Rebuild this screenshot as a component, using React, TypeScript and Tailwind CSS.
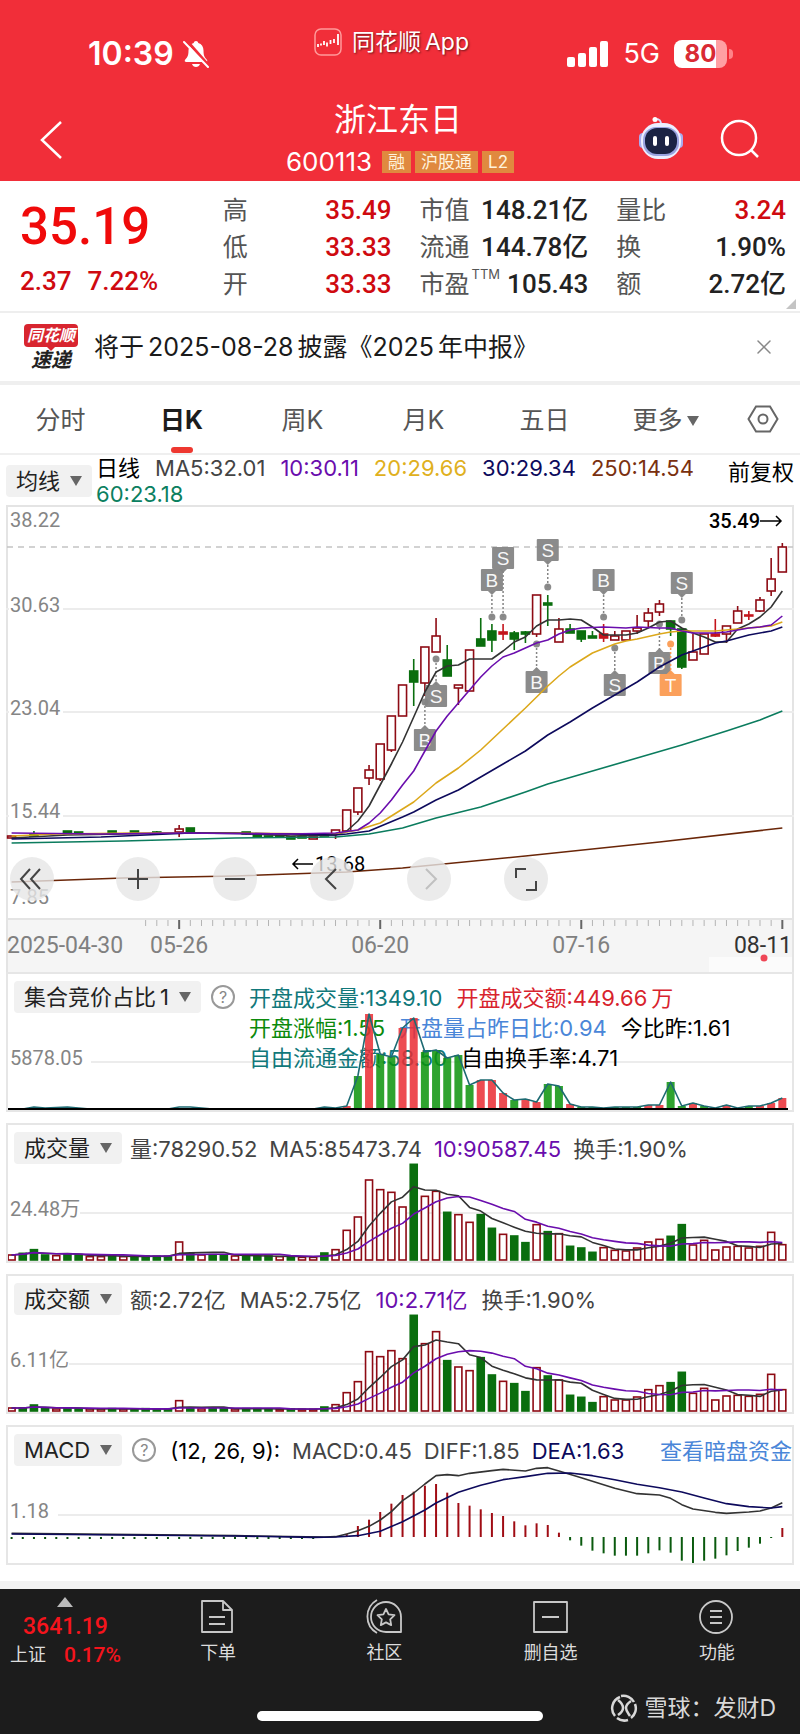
import type { ReactNode } from 'react'
import { X } from 'lucide-react'

const RED = '#8e0b14'
const GREEN = '#0a6e0e'

const STEP = 11.17
const xAt = (i: number) => 5.6 + STEP * i

type Point = [number, number]

// [index, body top, body bottom, wick top, wick bottom, colour]
type Candle = [number, number, number, number, number, 'r' | 'g' | 'f']

const candles: Candle[] = [
  [0, 331, 333, 331, 333, 'r'],
  [2, 329, 331, 326, 331, 'g'],
  [5, 326, 329, 326, 329, 'g'],
  [6, 327, 328, 327, 328, 'g'],
  [9, 326, 328, 326, 328, 'g'],
  [11, 326, 328, 326, 328, 'g'],
  [13, 327, 328, 326, 328, 'g'],
  [15, 324, 327, 320, 332, 'r'],
  [16, 323, 327, 323, 327, 'g'],
  [21, 327, 329, 327, 330, 'g'],
  [22, 330, 332, 330, 332, 'g'],
  [23, 331, 332, 331, 332, 'g'],
  [24, 331, 332, 331, 332, 'g'],
  [25, 332, 334, 332, 334, 'g'],
  [26, 332, 333, 332, 333, 'g'],
  [27, 332, 334, 332, 334, 'r'],
  [28, 329, 331, 328, 331, 'g'],
  [29, 325, 329, 325, 334, 'r'],
  [30, 305, 326, 305, 326, 'r'],
  [31, 283, 307, 283, 310, 'r'],
  [32, 265, 273, 260, 280, 'r'],
  [33, 239, 274, 239, 276, 'r'],
  [34, 211, 245, 211, 247, 'r'],
  [35, 180, 211, 180, 211, 'r'],
  [36, 166, 177, 154, 201, 'g'],
  [37, 142, 178, 142, 191, 'r'],
  [38, 131, 147, 113, 147, 'r'],
  [39, 155, 171, 140, 171, 'g'],
  [40, 180, 183, 180, 200, 'r'],
  [41, 145, 186, 145, 186, 'r'],
  [42, 134, 141, 113, 141, 'g'],
  [43, 126, 135, 119, 147, 'g'],
  [44, 127, 129, 119, 135, 'f'],
  [45, 128, 134, 126, 145, 'g'],
  [46, 127, 129, 126, 138, 'g'],
  [47, 90, 129, 90, 132, 'r'],
  [48, 98, 100, 90, 121, 'g'],
  [49, 124, 137, 113, 137, 'r'],
  [50, 124, 128, 119, 128, 'g'],
  [51, 126, 134, 126, 137, 'g'],
  [52, 131, 133, 126, 133, 'g'],
  [53, 129, 133, 119, 137, 'f'],
  [54, 131, 135, 126, 135, 'r'],
  [55, 126, 135, 126, 135, 'r'],
  [56, 123, 126, 110, 129, 'r'],
  [57, 108, 116, 103, 123, 'r'],
  [58, 99, 107, 95, 111, 'r'],
  [59, 116, 124, 116, 131, 'g'],
  [60, 124, 162, 124, 164, 'g'],
  [61, 147, 155, 129, 155, 'r'],
  [62, 129, 149, 129, 149, 'r'],
  [63, 129, 131, 114, 132, 'f'],
  [64, 121, 129, 121, 138, 'r'],
  [65, 106, 118, 101, 118, 'r'],
  [66, 110, 111, 106, 115, 'f'],
  [67, 95, 106, 92, 107, 'r'],
  [68, 74, 86, 53, 91, 'r'],
  [69, 42, 67, 38, 67, 'r'],
]

const averages: { color: string; points: Point[] }[] = [
  {
    color: '#6a2608',
    points: [[0, 377], [10, 373], [20, 371], [30, 367], [35, 363], [46, 351], [58, 337], [69, 323]],
  },
  {
    color: '#0b7c5e',
    points: [[0, 338], [10, 336], [20, 333], [29, 332], [32, 329], [35, 323], [38, 313], [42, 302], [46, 287], [48, 279], [52, 266], [56, 253], [60, 240], [64, 226], [67, 215], [69, 206]],
  },
  {
    color: '#333333',
    points: [[0, 333], [5, 330], [10, 329], [15, 328], [20, 328], [25, 331], [29, 330], [30, 326], [31, 316], [32, 301], [33, 280], [34, 259], [35, 237], [36, 212], [37, 187], [38, 167], [39, 161], [40, 160], [41, 154], [42, 154], [43, 154], [44, 146], [45, 137], [46, 132], [47, 121], [48, 115], [49, 115], [50, 114], [51, 115], [52, 122], [53, 130], [54, 130], [55, 130], [56, 128], [57, 123], [58, 117], [59, 116], [60, 123], [61, 128], [62, 132], [63, 137], [64, 137], [65, 124], [66, 119], [67, 112], [68, 102], [69, 86]],
  },
  {
    color: '#dca81b',
    points: [[0, 331], [4, 329], [11, 328], [20, 328], [29, 329], [30, 327], [31, 325], [33, 318], [35, 304], [36, 297], [38, 278], [40, 263], [42, 245], [44, 224], [46, 203], [47, 192], [48, 181], [49, 171], [50, 162], [52, 148], [54, 139], [55, 136], [56, 134], [58, 129], [59, 127], [60, 126], [63, 126], [66, 123], [68, 121], [69, 117]],
  },
  {
    color: '#0d0a5c',
    points: [[0, 334], [8, 332], [16, 328], [25, 329], [29, 330], [30, 329], [32, 326], [35, 312], [36, 307], [38, 295], [40, 285], [42, 272], [44, 259], [46, 246], [48, 230], [50, 217], [52, 203], [54, 190], [56, 177], [58, 162], [60, 150], [62, 142], [63, 138], [64, 136], [66, 130], [68, 126], [69, 122]],
  },
  {
    color: '#6a0dad',
    points: [[0, 328], [8, 329], [15, 328], [25, 329], [29, 328], [31, 325], [32, 318], [33, 308], [34, 295], [35, 280], [36, 266], [37, 246], [38, 226], [39, 211], [40, 198], [41, 185], [42, 172], [43, 161], [44, 152], [45, 148], [46, 143], [47, 138], [48, 135], [49, 129], [50, 125], [51, 123], [53, 122], [55, 123], [56, 122], [58, 123], [59, 123], [60, 126], [61, 128], [63, 128], [64, 127], [66, 123], [67, 122], [68, 120], [69, 111]],
  },
]

const markers: { i: number; label: string; top: number; dot: number }[] = [
  { i: 38, label: 'S', top: 180, dot: 154 },
  { i: 37, label: 'B', top: 224, dot: 197 },
  { i: 43, label: 'B', top: 64, dot: 112 },
  { i: 44, label: 'S', top: 42, dot: 112 },
  { i: 48, label: 'S', top: 34, dot: 82 },
  { i: 47, label: 'B', top: 166, dot: 139 },
  { i: 53, label: 'B', top: 64, dot: 112 },
  { i: 54, label: 'S', top: 169, dot: 143 },
  { i: 58, label: 'B', top: 147, dot: 119 },
  { i: 59, label: 'T', top: 169, dot: 139 },
  { i: 60, label: 'S', top: 67, dot: 115 },
]

// one letter per trading day: r = up, g = down
const days = 'rgggrggrrgrggggrgrggrgggrgrrgrrrrrrrgrrgrrggrggrgrgggrrrrrrggrrrrrrrrr'

const volume = [
  18, 23, 34, 18, 16, 19, 19, 13, 13, 15, 13, 14, 15, 14, 14, 57, 22, 18, 19, 16, 15, 14, 14, 15, 13,
  14, 11, 11, 24, 34, 92, 132, 243, 214, 206, 162, 290, 194, 209, 146, 139, 116, 139, 98, 80, 75, 55,
  109, 88, 82, 44, 39, 26, 40, 32, 30, 39, 57, 65, 74, 109, 48, 62, 33, 42, 44, 39, 44, 86, 49,
]

const turnover = [
  12, 12, 21, 10, 9, 10, 10, 9, 9, 10, 9, 9, 10, 9, 9, 34, 11, 9, 10, 10, 9, 10, 10, 9, 8, 9, 8, 8, 15,
  22, 58, 91, 181, 166, 184, 160, 290, 205, 241, 154, 135, 124, 163, 111, 92, 85, 61, 133, 108, 96, 50,
  44, 28, 46, 36, 36, 45, 67, 79, 88, 119, 56, 71, 36, 48, 50, 47, 53, 113, 67,
]

// bar tops of the auction chart, from day 28 on
const auction: [number, 'r' | 'g'][] = [
  [135, 'g'], [136, 'g'], [134, 'r'], [104, 'g'], [42, 'r'], [82, 'g'], [85, 'g'], [56, 'r'], [46, 'r'],
  [80, 'g'], [78, 'g'], [86, 'g'], [83, 'g'], [113, 'g'], [108, 'r'], [108, 'r'], [121, 'r'], [128, 'g'],
  [127, 'r'], [130, 'r'], [112, 'g'], [114, 'g'], [132, 'r'], [135, 'g'], [135, 'g'], [136, 'g'],
  [135, 'g'], [135, 'g'], [135, 'g'], [133, 'r'], [133, 'r'], [110, 'g'], [134, 'g'], [131, 'r'],
  [134, 'g'], [136, 'g'], [133, 'r'], [136, 'g'], [134, 'g'], [134, 'r'], [131, 'r'], [126, 'r'],
]

const histogram = [
  10, 33, 52, 75, 100, 126, 136, 154, 159, 133, 102, 94, 83, 72, 63, 47, 35, 41, 36, 13, -10, -26, -41,
  -49, -56, -56, -56, -49, -40, -47, -71, -78, -71, -65, -55, -42, -32, -20, -3, 27,
]

const diff: Point[] = [
  [0, 373], [20, 380], [28, 384], [29, 383], [30, 375], [31, 365], [32, 352], [33, 333], [34, 308],
  [35, 275], [36, 252], [37, 225], [38, 200], [39, 197], [40, 200], [41, 193], [43, 185], [44, 181],
  [46, 186], [47, 178], [48, 176], [49, 186], [51, 206], [54, 238], [56, 254], [58, 258], [59, 268],
  [60, 287], [61, 300], [63, 310], [64, 313], [66, 309], [67, 306], [68, 297], [69, 281],
]

const dea: Point[] = [
  [0, 375], [20, 381], [27, 385], [29, 384], [31, 380], [33, 367], [35, 338], [37, 303], [38, 282],
  [40, 250], [42, 229], [44, 212], [46, 203], [48, 193], [50, 192], [52, 200], [54, 212], [56, 226],
  [58, 236], [60, 249], [62, 267], [64, 284], [66, 293], [68, 297], [69, 293],
]

const toPoints = (points: Point[]) => points.map(([i, y]) => `${xAt(i)},${y}`).join(' ')

function movingAverage(values: number[], size: number): Point[] {
  return values.map((_, i) => {
    const part = values.slice(Math.max(0, i - size + 1), i + 1)
    return [i, 138 - part.reduce((a, b) => a + b, 0) / part.length / 3]
  })
}

function Line({ points, color }: { points: Point[]; color: string }) {
  return (
    <polyline
      points={toPoints(points)}
      fill="none"
      stroke={color}
      strokeWidth="1.6"
      strokeLinejoin="round"
    />
  )
}

function Caret() {
  return (
    <svg viewBox="0 0 12 10" className="h-2.5 w-3 shrink-0 fill-[#666]">
      <path d="M0 0h12L6 10z" />
    </svg>
  )
}

function StatusBar() {
  return (
    <div className="grid h-24 grid-cols-[226px_1fr_auto] items-start pr-[67px] pl-[88px]">
      <div className="flex items-center gap-2 pt-9">
        <span className="text-[32px] leading-9 font-semibold">10:39</span>
        <svg viewBox="0 0 28 28" className="size-7">
          <path
            d="M14 1c1.3 0 2 .8 2.300 2 3.500 1 5.200 4 5.200 7.500 0 6 1.500 7 3.500 9.500.8 1-.1 2-1.200 2H4.200c-1.100 0-2-1-1.200-2 2-2.500 3.500-3.500 3.500-9.500 0-3.500 1.700-6.500 5.200-7.500.3-1.200 1-2 2.300-2zM10 24h8c-.6 2-2.200 3-4 3s-3.400-1-4-3z"
            fill="#fff"
          />
          <path d="M5 1l22 25" stroke="#f12e39" strokeWidth="3" />
          <path d="M2 2l24 25" stroke="#fff" strokeWidth="2" strokeLinecap="round" />
        </svg>
      </div>
      <div className="flex items-center gap-2.5 pt-6">
        <svg viewBox="0 0 28 28" className="size-7">
          <rect x="1" y="1" width="26" height="26" rx="6" fill="none" stroke="#ff9a9a" strokeWidth="1.5" />
          <path d="M4 16v3M7 15.500v2M10 13v4M13 14.500v4M16.500 12v4M20 11v4M24 6v11" stroke="#fff" strokeWidth="1.800" />
        </svg>
        <span className="text-[23px] leading-9 text-shadow-[1px_1px_2px_#0008]">
          同花顺<span className="ml-1">App</span>
        </span>
      </div>
      <div className="flex items-center gap-3.5 pt-9">
        <svg viewBox="0 0 42 26" className="h-[26px] w-[42px] shrink-0 fill-white">
          <rect x="0" y="16" width="8" height="10" rx="2" />
          <rect x="11" y="12" width="8" height="14" rx="2" />
          <rect x="22" y="6" width="8" height="20" rx="2" />
          <rect x="33" y="0" width="8" height="26" rx="2" />
        </svg>
        <span className="text-[27px] leading-9">5G</span>
        <div className="flex items-center gap-0.5">
          <span className="flex h-7 w-[53px] items-center justify-center overflow-hidden rounded-lg bg-linear-to-r from-white from-80% to-[#ff9fa3] to-80% text-2xl font-bold text-[#d92a34]">
            80
          </span>
          <span className="h-2.5 w-1 rounded-r bg-[#ff8288]" />
        </div>
      </div>
    </div>
  )
}

function Badge({ children }: { children: ReactNode }) {
  return (
    <span className="flex h-[22px] items-center bg-[#e0893f] px-1.5 text-[17px] leading-[22px] text-[#fff3dc]">
      {children}
    </span>
  )
}

function Robot() {
  return (
    <svg viewBox="0 0 46 44" className="h-11 w-[46px]">
      <path d="M23 9c0-4-1-6-5-6" fill="none" stroke="#d8dcff" strokeWidth="2" />
      <circle cx="17" cy="3.500" r="2.500" fill="#fff" />
      <rect x="1" y="17" width="8" height="15" rx="4" fill="#a9abef" />
      <rect x="37" y="17" width="8" height="15" rx="4" fill="#a9abef" />
      <rect x="3" y="7" width="40" height="36" rx="17" fill="#eceeff" />
      <rect x="5" y="11" width="36" height="29" rx="13" fill="#9aa3e0" />
      <rect x="7" y="12" width="32" height="26" rx="12" fill="#1b2344" />
      <rect x="15" y="20" width="4" height="10" rx="2" fill="#fff" />
      <rect x="27" y="20" width="4" height="10" rx="2" fill="#fff" />
    </svg>
  )
}

function TitleBar() {
  return (
    <div className="flex h-[85px] items-start justify-between pr-10 pl-9">
      <button type="button" aria-label="返回" className="mt-6 w-[122px]">
        <svg viewBox="0 0 32 40" className="h-10 w-8">
          <path d="M25 2L6 20l19 18" fill="none" stroke="#fff" strokeWidth="2.500" />
        </svg>
      </button>
      <div className="flex flex-col items-center gap-2 pt-1">
        <h1 className="text-[32px] leading-10">浙江东日</h1>
        <div className="flex h-7 items-center gap-1 pl-1">
          <span className="mr-1.5 text-[26px] leading-7">600113</span>
          <Badge>融</Badge>
          <Badge>沪股通</Badge>
          <Badge>L2</Badge>
        </div>
      </div>
      <div className="mt-5 flex items-center gap-9">
        <button type="button" aria-label="智能助手">
          <Robot />
        </button>
        <button type="button" aria-label="搜索">
          <svg viewBox="0 0 40 40" className="size-10" fill="none" stroke="#fff" strokeWidth="2.500">
            <circle cx="19" cy="20" r="17" />
            <path d="M31 32l7 7" />
          </svg>
        </button>
      </div>
    </div>
  )
}

function Stat({ label, sup, value, up }: { label: string; sup?: string; value: string; up?: boolean }) {
  return (
    <div className="flex h-[37px] items-center justify-between">
      <dt className="flex items-start text-[25px] leading-9 text-[#555]">
        {label}
        {sup ? <sup className="top-0 ml-0.5 text-[13px] leading-4">{sup}</sup> : null}
      </dt>
      <dd
        className={
          up
            ? "font-[Roboto,'Noto_Sans_CJK_SC',sans-serif] text-[26px] leading-9 font-medium text-[#cf0a10]"
            : "font-[Roboto,'Noto_Sans_CJK_SC',sans-serif] text-[26px] leading-9 font-medium text-[#222]"
        }
      >
        {value}
      </dd>
    </div>
  )
}

function Quote() {
  return (
    <section className="relative grid h-[132px] grid-cols-[175fr_169fr_169fr_170fr] gap-7 border-b-2 border-[#eee] pt-2.5 pr-3.5 pl-5">
      <div className="font-[Roboto,sans-serif] font-medium">
        <p className="pt-2 text-[51px] leading-[56px] text-[#f00a0a]">35.19</p>
        <p className="flex gap-4 pt-2 text-[26px] leading-9 text-[#cf0a10]">
          <span>2.37</span>
          <span>7.22%</span>
        </p>
      </div>
      <dl>
        <Stat label="高" value="35.49" up />
        <Stat label="低" value="33.33" up />
        <Stat label="开" value="33.33" up />
      </dl>
      <dl>
        <Stat label="市值" value="148.21亿" />
        <Stat label="流通" value="144.78亿" />
        <Stat label="市盈" sup="TTM" value="105.43" />
      </dl>
      <dl>
        <Stat label="量比" value="3.24" up />
        <Stat label="换" value="1.90%" />
        <Stat label="额" value="2.72亿" />
      </dl>
      <svg viewBox="0 0 10 10" className="absolute right-1 bottom-0.5 size-2.5 fill-[#c4c4c4]">
        <path d="M10 0v10H0z" />
      </svg>
    </section>
  )
}

function News() {
  return (
    <section className="flex h-[68px] items-center pr-6 pl-6">
      <div className="flex w-[54px] flex-col items-center font-bold italic">
        <span className="relative flex h-[23px] w-full items-center justify-center rounded-sm bg-[#d8252f] text-base leading-none text-white">
          同花顺
          <svg viewBox="0 0 8 4" className="absolute top-full h-1 w-2 fill-[#d8252f]">
            <path d="M0 0h8L4 4z" />
          </svg>
        </span>
        <span className="pt-0.5 text-xl leading-[22px] text-[#222]">速递</span>
      </div>
      <p className="ml-4 flex-1 text-[25px] leading-9 text-[#1a1a1a]">
        将于<span className="mx-1">2025-08-28</span>披露《2025<span className="ml-1">年中报》</span>
      </p>
      <button type="button" aria-label="关闭" className="text-[#888]">
        <X className="size-6" strokeWidth={1.5} />
      </button>
    </section>
  )
}

const tabs = ['分时', '日K', '周K', '月K', '五日']

function Tabs() {
  return (
    <nav className="flex h-[74px] border-t-4 border-b-2 border-[#efefef] text-[25px] text-[#555]">
      {tabs.map((tab) =>
        tab === '日K' ? (
          <button key={tab} type="button" className="relative flex-1 pt-1 font-bold text-[#1c1c1c]">
            {tab}
            <span className="absolute bottom-0 left-1/2 h-1.5 w-[22px] -translate-x-1/2 rounded-full bg-[#ee3830]" />
          </button>
        ) : (
          <button key={tab} type="button" className="flex-1 pt-1">
            {tab}
          </button>
        ),
      )}
      <button type="button" className="flex flex-1 items-center justify-center gap-1 pt-1">
        更多
        <Caret />
      </button>
      <button type="button" aria-label="设置" className="flex w-[74px] items-center justify-center">
        <svg viewBox="0 0 32 28" className="h-7 w-8" fill="none" stroke="#666" strokeWidth="2">
          <path d="M9 1.500h14L30.500 14 23 26.500H9L1.500 14z" />
          <circle cx="16" cy="14" r="4.500" />
        </svg>
      </button>
    </nav>
  )
}

function Picker({ children }: { children: ReactNode }) {
  return (
    <button
      type="button"
      className="flex h-8 shrink-0 items-center gap-2.5 rounded-sm bg-[#f1f1f1] px-2.5 text-[22px] text-[#222]"
    >
      {children}
      <Caret />
    </button>
  )
}

function Averages() {
  return (
    <div className="flex h-[50px] items-start px-1.5 text-[22px] leading-[26px]">
      <div className="pt-2.5">
        <Picker>均线</Picker>
      </div>
      <div className="ml-1 flex flex-1 flex-wrap gap-x-[15px]">
        <span className="text-black">日线</span>
        <span className="text-[#444]">MA5:32.01</span>
        <span className="text-[#6a0dad]">10:30.11</span>
        <span className="text-[#e0b020]">20:29.66</span>
        <span className="text-[#0d0a5c]">30:29.34</span>
        <span className="text-[#7a300f]">250:14.54</span>
        <span className="text-[#0b8060]">60:23.18</span>
      </div>
      <button type="button" className="pt-1 text-black">
        前复权
      </button>
    </div>
  )
}

function CandleShape({ candle }: { candle: Candle }) {
  const [i, top, bottom, high, low, kind] = candle
  const x = xAt(i)
  const color = kind === 'g' ? GREEN : kind === 'f' ? '#c4141c' : RED
  return (
    <g stroke={color} strokeWidth="1.6">
      {high < top ? <path d={`M${x} ${high}V${top}`} /> : null}
      {low > bottom ? <path d={`M${x} ${bottom}V${low}`} /> : null}
      <rect x={x - 4} y={top} width="8" height={bottom - top} fill={kind === 'r' ? '#fff' : color} />
    </g>
  )
}

function Marker({ i, label, top, dot }: { i: number; label: string; top: number; dot: number }) {
  const x = xAt(i)
  const above = dot > top
  const color = label === 'T' ? '#fb9b52' : '#858585'
  const edge = above ? top + 22 : top
  const tip = above ? edge + 4 : edge - 4
  return (
    <g fill={color} fillOpacity="0.95">
      <path d={`M${x} ${dot}V${edge}`} stroke={color} strokeWidth="1.500" strokeDasharray="2 2" />
      <circle cx={x} cy={dot} r="3.500" />
      <rect x={x - 11} y={top} width="22" height="22" rx="1" />
      <path d={`M${x - 4} ${edge}h8L${x} ${tip}z`} />
      <text
        x={x}
        y={top + 18}
        textAnchor="middle"
        fill="#fff"
        className="font-['Liberation_Sans',sans-serif] text-[19px]"
      >
        {label}
      </text>
    </g>
  )
}

const controls: { label: string; path: string; off?: boolean }[] = [
  { label: '放大', path: 'M22 12v20M12 22h20' },
  { label: '缩小', path: 'M12 22h20' },
  { label: '向左', path: 'M26 12L16 22l10 10' },
  { label: '向右', path: 'M19 12l10 10-10 10', off: true },
  { label: '全屏', path: 'M12 21v-9h10M32 24v9H22' },
]

function Control({ label, path, off }: { label: string; path: string; off?: boolean }) {
  return (
    <button
      type="button"
      aria-label={label}
      disabled={off}
      className="size-11 rounded-full bg-[#e6e6e6]/80"
    >
      <svg viewBox="0 0 44 44" fill="none" stroke={off ? '#c0c0c0' : '#444'} strokeWidth="2">
        <path d={path} />
      </svg>
    </button>
  )
}

function PriceChart() {
  const ticks = Array.from({ length: 58 }, (_, n) => n + 12)
  return (
    <div className="relative">
      <svg
        viewBox="0 0 788 467"
        className="block w-full font-[Roboto,sans-serif] text-[20px]"
        role="img"
        aria-label="日K线"
      >
        <rect x="0" y="414" width="788" height="53" fill="#f5f5f5" />
        <rect x="703" y="452" width="85" height="15" fill="#fbfbfb" />
        <path d="M1 0V467M787 0V467M0 1H788M0 414H788" stroke="#e4e4e4" strokeWidth="2" />
        <path d="M0 104H788M0 207H788M0 311H788" stroke="#ececec" strokeWidth="2" />
        <path d="M1 42H787" stroke="#c4c4c4" strokeWidth="1.500" strokeDasharray="6 5" />
        {['38.22', '30.63', '23.04', '15.44', '7.85'].map((price, n) => {
          const y = [22, 107, 210, 313, 399][n]
          return (
            <g key={price}>
              <rect x="3" y={y - 16} width="54" height="18" fill="#fff" />
              <text x="4" y={y} fill="#858585">
                {price}
              </text>
            </g>
          )
        })}
        {candles.map((candle) => (
          <CandleShape key={candle[0]} candle={candle} />
        ))}
        {markers.map((marker) => (
          <Marker key={marker.i} {...marker} />
        ))}
        {averages.map(({ color, points }) => (
          <Line key={color} color={color} points={points} />
        ))}
        <g fill="#000" fontWeight="500">
          <text x="703" y="23">
            35.49
          </text>
          <text x="309" y="366" fontWeight="400">
            13.68
          </text>
        </g>
        <path
          d="M754 16h21M770 11l5 5-5 5M307 359h-20M292 354l-5 5 5 5"
          fill="none"
          stroke="#000"
          strokeWidth="1.500"
        />
        {ticks.map((i) => (
          <path
            key={i}
            d={i % 18 === 15 ? `M${xAt(i)} 415v9` : `M${xAt(i)} 415v6`}
            stroke={i % 18 === 15 ? '#666' : '#b4b4b4'}
            strokeWidth={i % 18 === 15 ? 2 : 1}
          />
        ))}
        <g fill="#808080" className="text-[23px]">
          <text x="1" y="448">
            2025-04-30
          </text>
          <text x={xAt(15)} y="448" textAnchor="middle">
            05-26
          </text>
          <text x={xAt(33)} y="448" textAnchor="middle">
            06-20
          </text>
          <text x={xAt(51)} y="448" textAnchor="middle">
            07-16
          </text>
          <text x="786" y="448" textAnchor="end" fill="#333">
            08-11
          </text>
        </g>
        <circle cx="758" cy="453" r="3.500" fill="#ef4656" />
      </svg>
      <div className="absolute inset-x-1 bottom-[71px] flex gap-[62px]">
        <Control label="最早" path="M20 12L11 22l9 10M30 12L21 22l9 10" />
        <div className="flex gap-[53px]">
          {controls.map((control) => (
            <Control key={control.label} {...control} />
          ))}
        </div>
      </div>
    </div>
  )
}

type PanelProps = {
  header: ReactNode
  mark: string
  children: ReactNode
}

function Panel({ header, mark, children }: PanelProps) {
  return (
    <section className="grid border-2 border-[#e6e6e6] [&>*]:[grid-area:1/1]">
      <svg
        viewBox="2 2 784 136"
        className="block w-full font-[Roboto,'Noto_Sans_CJK_SC',sans-serif] text-[20px]"
      >
        <path d={`M${mark.length * 11 + 8} 90H788`} stroke="#ececec" strokeWidth="2" />
        <text x="4" y="93" fill="#858585">
          {mark}
        </text>
      </svg>
      <div className="flex items-start pt-[7px] pl-1.5 text-[22px] leading-[34px] text-[#444]">{header}</div>
      <svg viewBox="2 2 784 136" className="pointer-events-none block w-full">
        {children}
      </svg>
    </section>
  )
}

function Help() {
  return (
    <button
      type="button"
      aria-label="说明"
      className="mt-1 mr-3.5 ml-2.5 flex size-6 shrink-0 items-center justify-center rounded-full border-2 border-[#999] text-base leading-none text-[#888]"
    >
      ?
    </button>
  )
}

function AuctionPanel() {
  const line: Point[] = [
    [0, 137], [1, 137], [2, 135], [3, 136], [5, 135], [7, 137], [14, 137], [15, 135], [16, 135],
    [18, 137], [27, 137],
  ]
  auction.forEach(([y], n) => line.push([n + 28, y]))

  return (
    <Panel
      mark="5878.05"
      header={
        <>
          <Picker>
            <span>
              集合竞价占比<span className="ml-1">1</span>
            </span>
          </Picker>
          <Help />
          <div className="pt-0.5 leading-[30px]">
            <p className="flex gap-3.5">
              <span className="text-[#11787a]">开盘成交量:1349.10</span>
              <span className="text-[#d8232d]">
                开盘成交额:449.66<span className="ml-1">万</span>
              </span>
            </p>
            <p className="flex gap-3.5">
              <span className="text-[#0b8a0b]">开盘涨幅:1.55</span>
              <span className="text-[#4a86d8]">开盘量占昨日比:0.94</span>
              <span className="text-black">今比昨:1.61</span>
            </p>
            <p className="flex gap-3.5">
              <span className="text-[#11787a]">自由流通金额:58.50</span>
              <span className="text-black">自由换手率:4.71</span>
            </p>
          </div>
        </>
      }
    >
      {auction.map(([y, kind], n) => (
        <rect
          key={n}
          x={xAt(n + 28) - 4}
          y={y}
          width="8"
          height={137 - y}
          fill={kind === 'r' ? '#ea2c32' : '#0a930a'}
          fillOpacity="0.85"
        />
      ))}
      <Line points={line} color="#1d6a72" />
      <path d="M2 137H782" stroke="#000" strokeWidth="2" />
    </Panel>
  )
}

function BarPanel({ header, mark, values }: { header: ReactNode; mark: string; values: number[] }) {
  return (
    <Panel mark={mark} header={header}>
      {values.map((value, i) => {
        const up = days[i] === 'r'
        return (
          <rect
            key={i}
            x={xAt(i) - 3.5}
            y={138 - value / 3}
            width="7"
            height={value / 3 - 1}
            fill={up ? '#fff' : GREEN}
            stroke={up ? RED : GREEN}
            strokeWidth="1.6"
          />
        )
      })}
      <Line points={movingAverage(values, 5)} color="#333333" />
      <Line points={movingAverage(values, 10)} color="#6a0dad" />
    </Panel>
  )
}

function MacdPanel() {
  const shift = (points: Point[]) => points.map(([i, y]): Point => [i, y / 3 - 16])
  return (
    <Panel
      mark="1.18"
      header={
        <>
          <Picker>MACD</Picker>
          <Help />
          <div className="flex flex-1 gap-3">
            <span className="text-black">(12, 26, 9):</span>
            <span>MACD:0.45</span>
            <span>DIFF:1.85</span>
            <span className="text-[#0d0a5c]">DEA:1.63</span>
          </div>
          <a href="#dark" className="text-[#4a86d8]">
            查看暗盘资金
          </a>
        </>
      }
    >
      {Array.from({ length: 28 }, (_, i) => (
        <path key={i} d={`M${xAt(i)} 112v2`} stroke="#0a4e0e" strokeWidth="2" />
      ))}
      {histogram.map((value, n) => (
        <path
          key={n}
          d={`M${xAt(n + 30)} 112v${-value / 3}`}
          stroke={value > 0 ? '#a00c14' : '#0a5a0e'}
          strokeWidth="2"
        />
      ))}
      <Line points={shift(diff)} color="#333333" />
      <Line points={shift(dea)} color="#0d0a5c" />
    </Panel>
  )
}

const actions: { label: string; icon: ReactNode }[] = [
  {
    label: '下单',
    icon: <path d="M2 2h21l9 9v22H2zM23 2v9h9M9 18h16M9 25h16" />,
  },
  {
    label: '社区',
    icon: (
      <>
        <path d="M20 3a14 14 0 1 0 0 30h15V18A15 15 0 0 0 20 3z" />
        <path d="M11 1a19 19 0 0 0 0 33" />
        <path d="M20 10l2.600 5.300 5.900.9-4.300 4.100 1 5.800-5.200-2.700-5.200 2.700 1-5.800-4.300-4.100 5.900-.9z" />
      </>
    ),
  },
  { label: '删自选', icon: <path d="M1 3h33v30H1zM9 18h17" /> },
  {
    label: '功能',
    icon: (
      <>
        <circle cx="17" cy="18" r="16" />
        <path d="M11 12h12M11 18h12M11 24h12" />
      </>
    ),
  },
]

function Footer() {
  return (
    <footer className="bg-[#1c1c1c] pb-[13px] text-[#ddd]">
      <div className="flex h-[90px]">
        <div className="flex w-[135px] flex-col items-start">
          <svg viewBox="0 0 16 10" className="mt-2 ml-[57px] h-2.5 w-4 fill-[#bbb]">
            <path d="M8 0l8 10H0z" />
          </svg>
          <span className="mt-1 ml-[23px] font-[Roboto,sans-serif] text-[23px] leading-8 font-medium text-[#f5141c]">
            3641.19
          </span>
          <span className="ml-2.5 flex w-[111px] items-center justify-between text-lg leading-6">
            上证
            <span className="font-[Roboto,sans-serif] text-[21px] font-medium text-[#f5141c]">0.17%</span>
          </span>
        </div>
        {actions.map(({ label, icon }) => (
          <button key={label} type="button" className="flex flex-1 flex-col items-center pt-2.5 text-lg leading-6">
            <svg
              viewBox="0 0 36 36"
              className="mb-1.5 size-9"
              fill="none"
              stroke="#c8c8c8"
              strokeWidth="1.800"
              strokeLinejoin="round"
            >
              {icon}
            </svg>
            {label}
          </button>
        ))}
      </div>
      <div className="grid grid-cols-[1fr_286px_1fr] items-end pt-4">
        <div className="col-start-2 h-2.5 rounded-full bg-white" />
        <div className="flex items-center justify-end gap-1.5 pr-6 text-[23px] leading-[26px] text-[#d8d8d8]">
          <svg viewBox="0 0 28 28" className="-my-1 size-7" fill="none" stroke="#d8d8d8" strokeWidth="2.500">
            <path d="M10 3a12 12 0 0 0-5 19M11 2a12 12 0 0 1 13 6M25 10a12 12 0 0 1-4 14M18 26a12 12 0 0 1-11-2" />
            <path d="M8 6c4 3 5 5 5 8s-2 5-5 7M21 7c-3 2-5 4-5 7s2 5 4 8" />
          </svg>
          雪球：发财D
        </div>
      </div>
    </footer>
  )
}

export default function App() {
  return (
    <div className="bg-white font-[Inter,'Noto_Sans_CJK_SC',sans-serif]">
      <header className="bg-[#f12e39] text-white">
        <StatusBar />
        <TitleBar />
      </header>
      <Quote />
      <News />
      <Tabs />
      <Averages />
      <main className="flex flex-col px-1.5">
        <PriceChart />
        <div className="flex flex-col gap-[11px]">
          <AuctionPanel />
          <BarPanel
            mark="24.48万"
            values={volume}
            header={
              <>
                <Picker>成交量</Picker>
                <div className="ml-2 flex gap-3">
                  <span>量:78290.52</span>
                  <span>MA5:85473.74</span>
                  <span className="text-[#6a0dad]">10:90587.45</span>
                  <span>换手:1.90%</span>
                </div>
              </>
            }
          />
          <BarPanel
            mark="6.11亿"
            values={turnover}
            header={
              <>
                <Picker>成交额</Picker>
                <div className="ml-2 flex gap-3.5">
                  <span>额:2.72亿</span>
                  <span>MA5:2.75亿</span>
                  <span className="text-[#6a0dad]">10:2.71亿</span>
                  <span>换手:1.90%</span>
                </div>
              </>
            }
          />
          <MacdPanel />
        </div>
      </main>
      <div className="mt-4 h-2 bg-[#f2f2f2]" />
      <Footer />
    </div>
  )
}
